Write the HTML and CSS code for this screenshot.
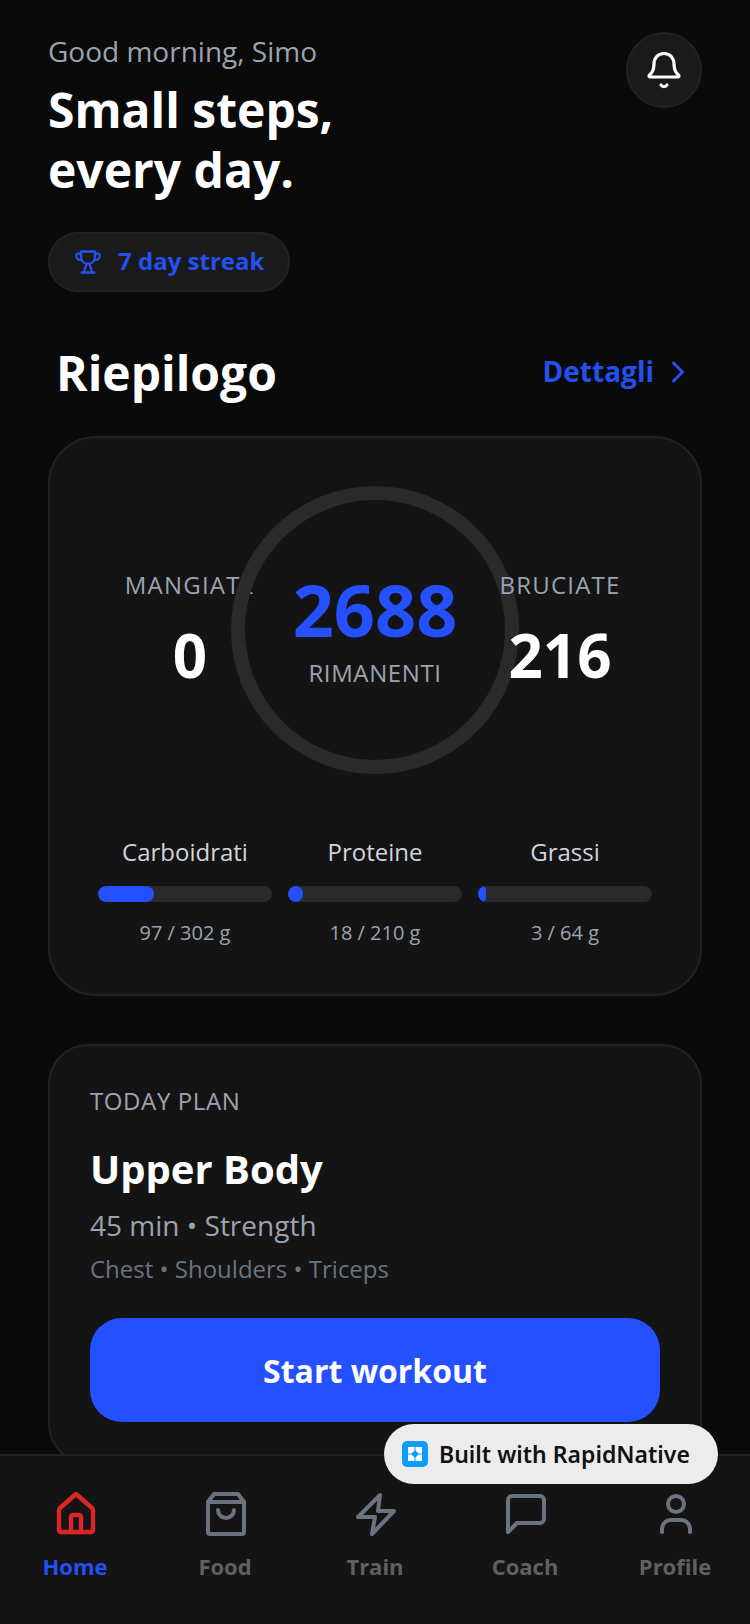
FILE: index.html
```html
<!DOCTYPE html>
<html lang="it">

<head>
    <meta charset="UTF-8">
    <title>Home</title>
    <meta name="viewport" content="width=device-width, initial-scale=1.0">
    <link rel="stylesheet" href="styles.css">
</head>

<body>
    <div class="app">
        <main class="content">
            <header class="top">
                <div>
                    <p class="greeting">Good morning, Simo</p>
                    <h1 class="headline">Small steps,<br>every day.</h1>
                </div>
                <button class="bell">
                    <svg width="40" height="40" viewBox="0 0 40 40" fill="none" stroke="#fff" stroke-width="3.2" stroke-linecap="round" stroke-linejoin="round">
                        <path d="M20 3.500C13.500 3.500 10 8.500 10 14C10 20 8 23 5.500 25C4.500 26 5 27 6.500 27H33.500C35 27 35.500 26 34.500 25C32 23 30 20 30 14C30 8.500 26.500 3.500 20 3.500Z"/>
                        <path d="M17 35a3.500 3.500 0 0 0 6 0"/>
                    </svg>
                </button>
            </header>

            <div class="streak">
                <svg width="28" height="28" viewBox="0 0 28 28" fill="none" stroke="#2450f0" stroke-width="2.300" stroke-linecap="round" stroke-linejoin="round">
                    <path d="M7 3.500H21V9a7 7 0 0 1-14 0Z"/>
                    <path d="M7 5.500H4.500C2.500 5.500 2 7 2.300 8.500C2.700 10.500 4.500 12 7.500 12"/>
                    <path d="M21 5.500H23.500C25.500 5.500 26 7 25.700 8.500C25.300 10.500 23.500 12 20.500 12"/>
                    <path d="M12.500 16L10 24.500"/>
                    <path d="M15.500 16L18 24.500"/>
                    <path d="M7.500 24.500H20.500"/>
                </svg>
                <span>7 day streak</span>
            </div>

            <section class="section-head">
                <h2>Riepilogo</h2>
                <a class="details">
                    <span>Dettagli</span>
                    <svg width="36" height="36" viewBox="0 0 24 24" fill="none" stroke="#2450f0" stroke-width="2" stroke-linecap="round" stroke-linejoin="round">
                        <polyline points="9 18 15 12 9 6"/>
                    </svg>
                </a>
            </section>

            <section class="card summary">
                <div class="calories">
                    <div class="stat">
                        <span class="stat-label">MANGIATE</span>
                        <span class="stat-value">0</span>
                    </div>
                    <div class="ring">
                        <span class="remaining">2688</span>
                        <span class="ring-label">RIMANENTI</span>
                    </div>
                    <div class="stat">
                        <span class="stat-label">BRUCIATE</span>
                        <span class="stat-value">216</span>
                    </div>
                </div>

                <div class="macros">
                    <div class="macro">
                        <span class="macro-name">Carboidrati</span>
                        <div class="track"><div class="fill" style="width: 32%"></div></div>
                        <span class="macro-amount">97 / 302 g</span>
                    </div>
                    <div class="macro">
                        <span class="macro-name">Proteine</span>
                        <div class="track"><div class="fill" style="width: 8.6%"></div></div>
                        <span class="macro-amount">18 / 210 g</span>
                    </div>
                    <div class="macro">
                        <span class="macro-name">Grassi</span>
                        <div class="track"><div class="fill" style="width: 4.7%"></div></div>
                        <span class="macro-amount">3 / 64 g</span>
                    </div>
                </div>
            </section>

            <section class="card plan">
                <p class="plan-label">TODAY PLAN</p>
                <h3 class="plan-title">Upper Body</h3>
                <p class="plan-meta">45 min • Strength</p>
                <p class="plan-muscles">Chest • Shoulders • Triceps</p>
                <button class="start">Start workout</button>
            </section>
        </main>

        <nav class="tabs">
            <a class="tab active">
                <svg width="48" height="48" viewBox="0 0 24 24" fill="none" stroke="#dc2626" stroke-width="2.200" stroke-linecap="round" stroke-linejoin="round">
                    <path d="M12.500 2L20.500 9a1.500 1.500 0 0 1 .5 1.200V20a1 1 0 0 1-1 1H5a1 1 0 0 1-1-1V10.200a1.500 1.500 0 0 1 .5-1.200Z"/>
                    <path d="M10 21V13.500a1 1 0 0 1 1-1h3a1 1 0 0 1 1 1V21"/>
                </svg>
                <span>Home</span>
            </a>
            <a class="tab">
                <svg width="48" height="48" viewBox="0 0 24 24" fill="none" stroke="#6b7280" stroke-width="2" stroke-linecap="round" stroke-linejoin="round">
                    <path d="M6.500 2L3.500 6V21a1 1 0 0 0 1 1H20.500a1 1 0 0 0 1-1V6L18.500 2Z"/>
                    <path d="M3.500 6H21.500"/>
                    <path d="M16.500 10a4 4 0 0 1-8 0"/>
                </svg>
                <span>Food</span>
            </a>
            <a class="tab">
                <svg width="48" height="48" viewBox="0 0 24 24" fill="none" stroke="#6b7280" stroke-width="2" stroke-linecap="round" stroke-linejoin="round">
                    <polygon points="14.500 2.500 3.500 13.500 12 13.500 10.500 22 21.500 10.500 13.500 10.500"/>
                </svg>
                <span>Train</span>
            </a>
            <a class="tab">
                <svg width="48" height="48" viewBox="0 0 24 24" fill="none" stroke="#6b7280" stroke-width="2" stroke-linecap="round" stroke-linejoin="round">
                    <path d="M21.500 14.500a2 2 0 0 1-2 2H8L3.500 21V5a2 2 0 0 1 2-2h14a2 2 0 0 1 2 2Z"/>
                </svg>
                <span>Coach</span>
            </a>
            <a class="tab">
                <svg width="48" height="48" viewBox="0 0 24 24" fill="none" stroke="#6b7280" stroke-width="2" stroke-linecap="round" stroke-linejoin="round">
                    <path d="M5.500 21V19.500a4.500 4.500 0 0 1 4.500-4.500h5a4.500 4.500 0 0 1 4.500 4.500V21"/>
                    <circle cx="12.500" cy="7" r="4"/>
                </svg>
                <span>Profile</span>
            </a>
        </nav>

        <div class="built">
            <svg width="26" height="26" viewBox="0 0 26 26">
                <rect width="26" height="26" rx="5" fill="#0a9dff"/>
                <path d="M6 6h6.500v3.500L9.500 12.500H6zM13.500 6H20v6.500h-3.500l-3-3zM6 13.500h3.500l3 3V20H6zM20 13.500V20h-6.500v-3.500l3-3z" fill="#fff"/>
            </svg>
            <span>Built with RapidNative</span>
        </div>
    </div>
</body>
</html>
```

FILE: styles.css
```css
body, html {
  height: 100%;
  margin: 0;
  padding: 0;
  background: #0a0a0a;
}

* {
  box-sizing: border-box;
}

.app {
  position: relative;
  width: 750px;
  height: 1624px;
  overflow: hidden;
  font-family: "Open Sans", sans-serif;
  color: #fff;
}

.content {
  display: flex;
  flex-direction: column;
  padding: 32px 48px 0;
}

p, h1, h2, h3 {
  margin: 0;
}

/* Cabecera */
.top {
  display: flex;
  justify-content: space-between;
  align-items: flex-start;
}

.greeting {
  font-size: 28px;
  line-height: 38px;
  color: #9ca3af;
}

.headline {
  margin-top: 10px;
  font-size: 48px;
  line-height: 60px;
  font-weight: 700;
}

.bell {
  display: flex;
  align-items: center;
  justify-content: center;
  width: 76px;
  height: 76px;
  padding: 0;
  border: 2px solid #222;
  border-radius: 50%;
  background: #1a1a1a;
}

.streak {
  display: flex;
  align-items: center;
  gap: 12px;
  align-self: flex-start;
  height: 60px;
  margin-top: 32px;
  padding: 0 24px 0 24px;
  border: 2px solid #222;
  border-radius: 30px;
  background: #1a1a1a;
  color: #2450f0;
  font-size: 24px;
  font-weight: 700;
}

.streak span {
  margin-left: 4px;
  margin-bottom: 4px;
}

.section-head {
  display: flex;
  justify-content: space-between;
  align-items: center;
  height: 60px;
  margin-top: 50px;
  padding: 0 6px 0 8px;
}

.section-head h2 {
  font-size: 48px;
  font-weight: 700;
}

.details {
  display: flex;
  align-items: center;
  gap: 6px;
  color: #2450f0;
  font-size: 28px;
  font-weight: 700;
}

.details span {
  margin-bottom: 2px;
}

/* Tarjetas */
.card {
  border: 2px solid #222;
  background: #141414;
}

.summary {
  margin-top: 34px;
  padding: 48px 48px 47px;
  border-radius: 48px;
}

.calories {
  display: flex;
  justify-content: center;
  align-items: center;
}

.stat {
  display: flex;
  flex-direction: column;
  align-items: center;
  gap: 18px;
  width: 180px;
}

.stat-label {
  font-size: 24px;
  line-height: 32px;
  letter-spacing: 1.2px;
  color: #9ca3af;
}

.stat-value {
  font-size: 60px;
  line-height: 72px;
  font-weight: 700;
}

.ring {
  display: flex;
  flex-direction: column;
  align-items: center;
  justify-content: center;
  gap: 6px;
  flex: none;
  width: 288px;
  height: 288px;
  margin: 0 -49px;
  padding-bottom: 4px;
  border: 14px solid #2a2a2a;
  border-radius: 50%;
}

.remaining {
  font-size: 72px;
  line-height: 84px;
  font-weight: 700;
  color: #2450ff;
}

.ring-label {
  font-size: 24px;
  line-height: 32px;
  letter-spacing: 0.6px;
  color: #9ca3af;
}

.macros {
  display: flex;
  gap: 16px;
  margin-top: 62px;
}

.macro {
  flex: 1;
  display: flex;
  flex-direction: column;
  align-items: center;
}

.macro-name {
  font-size: 24px;
  line-height: 32px;
  color: #d1d5db;
}

.track {
  width: 100%;
  height: 16px;
  margin-top: 18px;
  border-radius: 8px;
  background: #2a2a2a;
  overflow: hidden;
}

.fill {
  height: 100%;
  border-radius: 8px;
  background: #2450ff;
}

.macro-amount {
  margin-top: 17px;
  font-size: 20px;
  line-height: 28px;
  color: #9ca3af;
}

.plan {
  margin-top: 48px;
  padding: 39px 40px 40px;
  border-radius: 40px;
}

.plan-label {
  font-size: 24px;
  line-height: 32px;
  letter-spacing: 0.6px;
  color: #9ca3af;
}

.plan-title {
  margin-top: 26px;
  font-size: 40px;
  line-height: 52px;
  font-weight: 700;
}

.plan-meta {
  margin-top: 10px;
  font-size: 28px;
  line-height: 40px;
  color: #9ca3af;
}

.plan-muscles {
  margin-top: 6px;
  font-size: 24px;
  line-height: 36px;
  color: #6b7280;
}

.start {
  display: block;
  width: 100%;
  height: 104px;
  margin-top: 31px;
  border: none;
  border-radius: 32px;
  background: #2450ff;
  color: #fff;
  font-family: inherit;
  font-size: 32px;
  font-weight: 700;
}

/* Barra inferior */
.tabs {
  position: absolute;
  left: 0;
  right: 0;
  bottom: 0;
  display: grid;
  grid-template-columns: repeat(5, 1fr);
  height: 170px;
  padding-top: 34px;
  border-top: 2px solid #222;
  background: #141414;
}

.tab {
  display: flex;
  flex-direction: column;
  align-items: center;
  gap: 12px;
  font-size: 22px;
  line-height: 32px;
  font-weight: 700;
  color: #5f6063;
}

.tab.active {
  color: #2450f0;
}

.built {
  position: absolute;
  left: 384px;
  top: 1424px;
  display: flex;
  align-items: center;
  gap: 11px;
  width: 334px;
  height: 60px;
  padding-left: 18px;
  border-radius: 30px;
  background: #ececec;
  color: #111;
  font-family: "Noto Sans", sans-serif;
  font-size: 23px;
  font-weight: 600;
  white-space: nowrap;
}
```
